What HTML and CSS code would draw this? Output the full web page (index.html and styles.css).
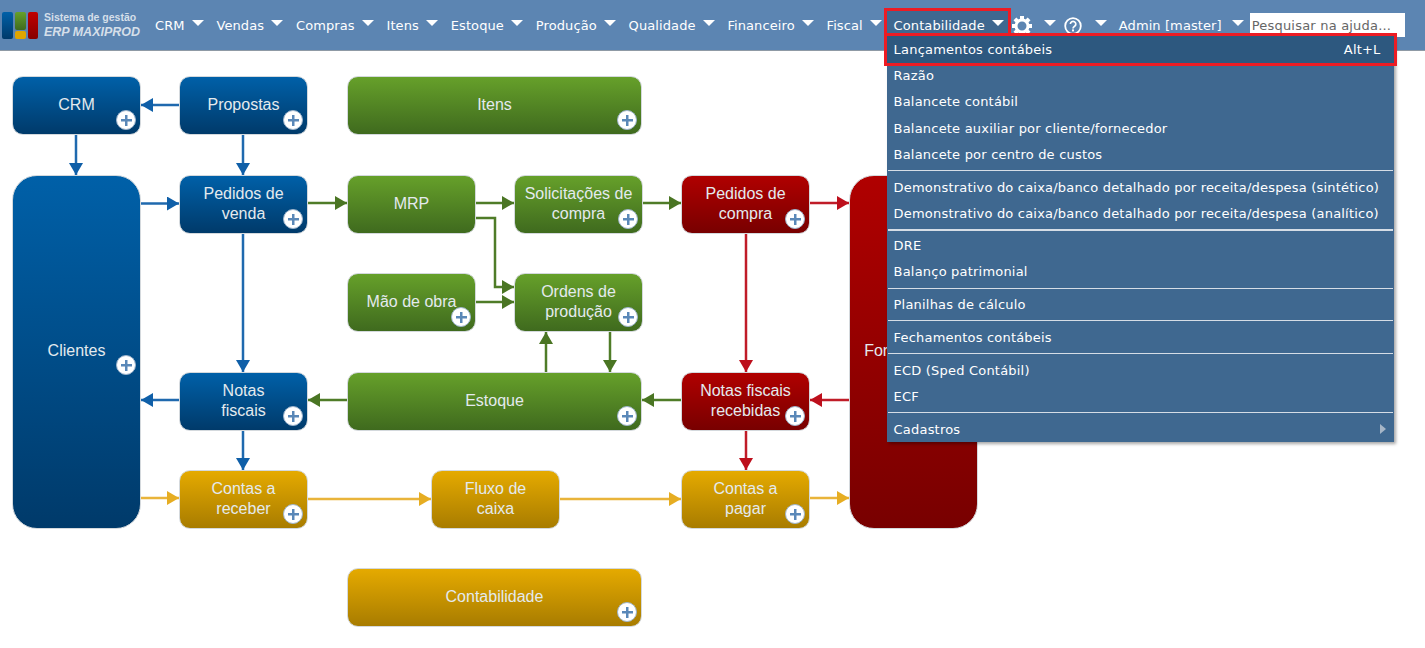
FILE: index.html
```html
<!DOCTYPE html>
<html lang="pt-BR">
<head>
    <meta charset="UTF-8">
    <title>ERP MAXIPROD</title>
    <link rel="stylesheet" href="styles.css">
</head>
<body>
    <header class="topbar">
        <div class="logo">
            <svg class="logo-mark" width="40" height="30" viewBox="0 0 40 30">
                <defs>
                    <linearGradient id="logo-blue" x1="0" y1="0" x2="0" y2="1"><stop offset="0" stop-color="#0060a8"/><stop offset="1" stop-color="#003a6a"/></linearGradient>
                    <linearGradient id="logo-green" x1="0" y1="0" x2="0" y2="1"><stop offset="0" stop-color="#66a02a"/><stop offset="1" stop-color="#3f6a1e"/></linearGradient>
                    <linearGradient id="logo-red" x1="0" y1="0" x2="0" y2="1"><stop offset="0" stop-color="#c00000"/><stop offset="1" stop-color="#860000"/></linearGradient>
                </defs>
                <rect x="2" y="1" width="11" height="27" rx="2" fill="url(#logo-blue)"/>
                <rect x="15" y="1" width="11" height="18" rx="2" fill="url(#logo-green)"/>
                <rect x="15" y="20" width="11" height="8" rx="2" fill="#dfa500"/>
                <rect x="28" y="1" width="10" height="27" rx="2" fill="url(#logo-red)"/>
            </svg>
            <div class="logo-text">
                <span class="logo-line1">Sistema de gestão</span>
                <span class="logo-line2">ERP MAXIPROD</span>
            </div>
        </div>
        <nav class="nav">
            <div class="nav-item">CRM<i class="caret"></i></div>
            <div class="nav-item">Vendas<i class="caret"></i></div>
            <div class="nav-item">Compras<i class="caret"></i></div>
            <div class="nav-item">Itens<i class="caret"></i></div>
            <div class="nav-item">Estoque<i class="caret"></i></div>
            <div class="nav-item">Produção<i class="caret"></i></div>
            <div class="nav-item">Qualidade<i class="caret"></i></div>
            <div class="nav-item">Financeiro<i class="caret"></i></div>
            <div class="nav-item">Fiscal<i class="caret"></i></div>
            <div class="nav-item nav-active">
                Contabilidade<i class="caret"></i>
                <div class="dropdown">
                    <div class="menu-row row-selected"><span>Lançamentos contábeis</span><span>Alt+L</span></div>
                    <div class="menu-row">Razão</div>
                    <div class="menu-row">Balancete contábil</div>
                    <div class="menu-row">Balancete auxiliar por cliente/fornecedor</div>
                    <div class="menu-row">Balancete por centro de custos</div>
                    <div class="menu-sep"></div>
                    <div class="menu-row">Demonstrativo do caixa/banco detalhado por receita/despesa (sintético)</div>
                    <div class="menu-row">Demonstrativo do caixa/banco detalhado por receita/despesa (analítico)</div>
                    <div class="menu-sep sep-thick"></div>
                    <div class="menu-row">DRE</div>
                    <div class="menu-row">Balanço patrimonial</div>
                    <div class="menu-sep"></div>
                    <div class="menu-row">Planilhas de cálculo</div>
                    <div class="menu-sep"></div>
                    <div class="menu-row">Fechamentos contábeis</div>
                    <div class="menu-sep"></div>
                    <div class="menu-row">ECD (Sped Contábil)</div>
                    <div class="menu-row">ECF</div>
                    <div class="menu-sep"></div>
                    <div class="menu-row"><span>Cadastros</span><i class="sub-arrow"></i></div>
                </div>
            </div>
            <div class="nav-item nav-icon nav-gear">
                <svg width="20" height="20" viewBox="0 0 20 20">
                    <g fill="#fff">
                        <rect x="8" y="0" width="4" height="4"/>
                        <rect x="8" y="16" width="4" height="4"/>
                        <rect x="0" y="8" width="4" height="4"/>
                        <rect x="16" y="8" width="4" height="4"/>
                        <rect x="8" y="0" width="4" height="4" transform="rotate(45 10 10)"/>
                        <rect x="8" y="16" width="4" height="4" transform="rotate(45 10 10)"/>
                        <rect x="0" y="8" width="4" height="4" transform="rotate(45 10 10)"/>
                        <rect x="16" y="8" width="4" height="4" transform="rotate(45 10 10)"/>
                    </g>
                    <circle cx="10" cy="10" r="6" fill="none" stroke="#fff" stroke-width="3"/>
                </svg>
                <i class="caret"></i>
            </div>
            <div class="nav-item nav-icon">
                <svg width="18" height="18" viewBox="0 0 18 18">
                    <circle cx="9" cy="9" r="7.8" fill="none" stroke="#fff" stroke-width="1.8"/>
                    <path d="M6.4 7a2.7 2.6 0 1 1 4.2 2.2c-1 .7-1.6 1.1-1.6 2.3" fill="none" stroke="#fff" stroke-width="1.7"/>
                    <rect x="8" y="12.4" width="2" height="2" fill="#fff"/>
                </svg>
                <i class="caret"></i>
            </div>
            <div class="nav-item nav-user">Admin [master]<i class="caret"></i></div>
        </nav>
        <input class="help-search" type="text" placeholder="Pesquisar na ajuda...">
    </header>

    <main class="diagram">
        <svg class="edges" width="1000" height="600" viewBox="0 51 1000 600">
            <defs>
                <marker id="head-blue" markerUnits="userSpaceOnUse" markerWidth="13" markerHeight="14" refX="12" refY="7" orient="auto"><path d="M0 0L12 7L0 14z" fill="#0f5fa8"/></marker>
                <marker id="head-green" markerUnits="userSpaceOnUse" markerWidth="13" markerHeight="14" refX="12" refY="7" orient="auto"><path d="M0 0L12 7L0 14z" fill="#4a7523"/></marker>
                <marker id="head-red" markerUnits="userSpaceOnUse" markerWidth="13" markerHeight="14" refX="12" refY="7" orient="auto"><path d="M0 0L12 7L0 14z" fill="#bd0f1c"/></marker>
                <marker id="head-gold" markerUnits="userSpaceOnUse" markerWidth="13" markerHeight="14" refX="12" refY="7" orient="auto"><path d="M0 0L12 7L0 14z" fill="#e6ad22"/></marker>
            </defs>
            <g class="edge-blue" marker-end="url(#head-blue)">
                <path d="M179 105H141"/>
                <path d="M76 135V175"/>
                <path d="M243 135V175"/>
                <path d="M141 203.500H179"/>
                <path d="M243 234V372"/>
                <path d="M179 400H141"/>
                <path d="M243 431V470"/>
            </g>
            <g class="edge-green" marker-end="url(#head-green)">
                <path d="M308 203H347"/>
                <path d="M475 203H514"/>
                <path d="M475 218H495V287H514"/>
                <path d="M475 302H514"/>
                <path d="M642 203H681"/>
                <path d="M546 372V332"/>
                <path d="M610 332V372"/>
                <path d="M347 400H308"/>
                <path d="M681 400H642"/>
            </g>
            <g class="edge-red" marker-end="url(#head-red)">
                <path d="M810 203H849"/>
                <path d="M746 234V372"/>
                <path d="M849 400H810"/>
                <path d="M746 431V470"/>
            </g>
            <g class="edge-gold" marker-end="url(#head-gold)">
                <path d="M141 498H179"/>
                <path d="M308 499H431"/>
                <path d="M559 499H681"/>
                <path d="M810 498H849"/>
            </g>
        </svg>

        <div class="node blue n-crm">CRM<i class="plus"></i></div>
        <div class="node blue n-propostas">Propostas<i class="plus"></i></div>
        <div class="node green n-itens">Itens<i class="plus"></i></div>
        <div class="node blue tall n-clientes">Clientes<i class="plus plus-mid"></i></div>
        <div class="node blue n-pedidos-venda">Pedidos de<br>venda<i class="plus"></i></div>
        <div class="node green n-mrp">MRP</div>
        <div class="node green n-solicitacoes">Solicitações de<br>compra<i class="plus"></i></div>
        <div class="node red n-pedidos-compra">Pedidos de<br>compra<i class="plus"></i></div>
        <div class="node red tall n-fornecedores">Fornecedores</div>
        <div class="node green n-mao">Mão de obra<i class="plus"></i></div>
        <div class="node green n-ordens">Ordens de<br>produção<i class="plus"></i></div>
        <div class="node blue n-notas">Notas<br>fiscais<i class="plus"></i></div>
        <div class="node green n-estoque">Estoque<i class="plus"></i></div>
        <div class="node red n-recebidas">Notas fiscais<br>recebidas<i class="plus"></i></div>
        <div class="node gold n-receber">Contas a<br>receber<i class="plus"></i></div>
        <div class="node gold n-fluxo">Fluxo de<br>caixa</div>
        <div class="node gold n-pagar">Contas a<br>pagar<i class="plus"></i></div>
        <div class="node gold n-contabilidade">Contabilidade<i class="plus"></i></div>
    </main>
</body>
</html>
```

FILE: styles.css
```css
html, body {
    margin: 0;
    padding: 0;
    height: 648px;
    overflow: hidden;
    background: #fff;
}
body {
    font-family: "DejaVu Sans", sans-serif;
}

/* top bar */
.topbar {
    display: flex;
    align-items: center;
    height: 50px;
    background-color: #5c85b2;
    border-bottom: 1px solid #8f9aa5;
    position: relative;
    z-index: 5;
}
.logo {
    display: flex;
    align-items: center;
    width: 148px;
    flex: none;
}
.logo-mark {
    display: block;
    margin-top: 2px;
}
.logo-text {
    display: flex;
    flex-direction: column;
    margin-left: 4px;
    font-family: "Liberation Sans", sans-serif;
    font-weight: bold;
    color: #d5dfe9;
    white-space: nowrap;
}
.logo-line1 {
    font-size: 10.5px;
    line-height: 14px;
}
.logo-line2 {
    font-size: 12.5px;
    line-height: 16px;
    font-style: italic;
}
.nav {
    display: flex;
    align-items: center;
    margin-bottom: 3px;
    color: #fff;
    font-size: 13px;
    letter-spacing: 0.1px;
}
.nav-item {
    display: flex;
    align-items: center;
    position: relative;
    box-sizing: border-box;
    height: 25px;
    padding: 3px 5.8px 0 7px;
    white-space: nowrap;
}
.caret {
    width: 0;
    height: 0;
    margin-left: 7px;
    margin-bottom: 4px;
    border-left: 6px solid transparent;
    border-right: 6px solid transparent;
    border-top: 6px solid #fff;
}
.nav-active {
    background-color: #3f6890;
    outline: 3px solid #ed1c24;
    padding-right: 4px;
    margin: 0 4px 0 -1px;
}
.nav-icon {
    padding: 3px 2px 0 0;
    margin-right: 6px;
}
.nav-icon svg {
    display: block;
    margin-top: 2px;
}
.nav-icon .caret {
    margin-left: 13px;
}
.nav-gear .caret {
    margin-left: 12px;
}
.nav-user {
    margin-left: -3px;
    padding-right: 6px;
}
.nav-user .caret {
    margin-left: 10px;
}
.help-search {
    width: 155px;
    height: 24px;
    box-sizing: border-box;
    padding: 0 2px;
    border: none;
    background: #fff;
    font-family: "DejaVu Sans", sans-serif;
    font-size: 13px;
    letter-spacing: 0.2px;
    flex: none;
}
.help-search::placeholder {
    color: #666;
    opacity: 1;
}

/* dropdown */
.dropdown {
    position: absolute;
    left: 0;
    top: 25px;
    width: 507px;
    padding-top: 0.25px;
    letter-spacing: 0.2px;
    background-color: #3f6890;
    box-shadow: 2px 2px 3px rgba(0, 0, 0, 0.35);
    z-index: 10;
}
.menu-row {
    display: flex;
    justify-content: space-between;
    align-items: center;
    height: 26.25px;
    padding: 0 13px 0 7px;
    box-sizing: border-box;
}
.row-selected {
    background-color: #2d587f;
    outline: 3px solid #ed1c24;
}
.menu-sep {
    height: 1px;
    margin: 2.5px 1px 3px;
    background-color: #d5dde6;
}
.sep-thick {
    height: 2px;
    margin: 2px 1px;
}
.sub-arrow {
    width: 0;
    height: 0;
    margin-right: -5px;
    border-top: 5px solid transparent;
    border-bottom: 5px solid transparent;
    border-left: 6px solid #a6b6c7;
}

/* diagram: nodes sit on a free canvas */
.diagram {
    position: relative;
    height: 597px;
}
.edges {
    position: absolute;
    left: 0;
    top: 0;
}
.edges g path {
    fill: none;
    stroke-width: 2.5;
}
.edge-blue path { stroke: #1f69ae; }
.edge-green path { stroke: #4f7c28; }
.edge-red path { stroke: #c01c28; }
.edge-gold path { stroke: #e9b43a; }

.node {
    position: absolute;
    display: flex;
    align-items: center;
    justify-content: center;
    box-sizing: border-box;
    width: 129px;
    height: 59px;
    padding-bottom: 2px;
    border-radius: 11px;
    border: 1px solid #d4d9dd;
    font-family: "Liberation Sans", sans-serif;
    font-size: 16px;
    line-height: 20px;
    text-align: center;
    color: #e4eaee;
}
.tall { border-radius: 25px; height: 354px; }
.blue { background: linear-gradient(#0060a8, #003a6a); }
.green { background: linear-gradient(#66a02a, #3f6a1e); }
.red { background: linear-gradient(#b00000, #780000); }
.gold { background: linear-gradient(#e5aa00, #a87c00); }

.plus {
    position: absolute;
    right: 4px;
    bottom: 4px;
    width: 20px;
    height: 20px;
    box-sizing: border-box;
    border: 1px solid #9db4cc;
    border-radius: 50%;
    background:
        linear-gradient(#5a88b8, #5a88b8) center / 11px 2.5px no-repeat,
        linear-gradient(#5a88b8, #5a88b8) center / 2.5px 11px no-repeat,
        #fff;
}
.plus-mid {
    bottom: auto;
    top: 179px;
}

.n-crm { left: 12px; top: 25px; }
.n-propostas { left: 179px; top: 25px; }
.n-itens { left: 347px; top: 25px; width: 295px; }
.n-clientes { left: 12px; top: 124px; }
.n-pedidos-venda { left: 179px; top: 124px; }
.n-mrp { left: 347px; top: 124px; }
.n-solicitacoes { left: 514px; top: 124px; }
.n-pedidos-compra { left: 681px; top: 124px; }
.n-fornecedores { left: 849px; top: 124px; }
.n-mao { left: 347px; top: 222px; }
.n-ordens { left: 514px; top: 222px; }
.n-notas { left: 179px; top: 321px; }
.n-estoque { left: 347px; top: 321px; width: 295px; }
.n-recebidas { left: 681px; top: 321px; }
.n-receber { left: 179px; top: 419px; }
.n-fluxo { left: 431px; top: 419px; }
.n-pagar { left: 681px; top: 419px; }
.n-contabilidade { left: 347px; top: 517px; width: 295px; }
```
